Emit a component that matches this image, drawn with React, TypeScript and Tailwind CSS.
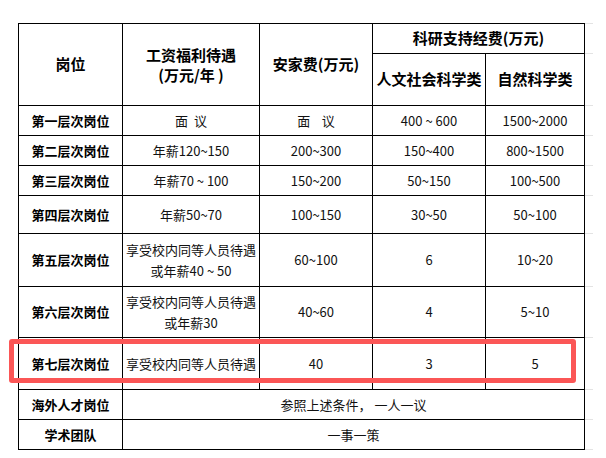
const rows: { name: string; pay: string[]; home: string; hum: string; sci: string; h: string }[] = [
  { name: "第一层次岗位", pay: ["面  议"], home: "面    议", hum: "400 ~ 600", sci: "1500~2000", h: "h-[30px]" },
  { name: "第二层次岗位", pay: ["年薪120~150"], home: "200~300", hum: "150~400", sci: "800~1500", h: "h-[30px]" },
  { name: "第三层次岗位", pay: ["年薪70 ~ 100"], home: "150~200", hum: "50~150", sci: "100~500", h: "h-[30px]" },
  { name: "第四层次岗位", pay: ["年薪50~70"], home: "100~150", hum: "30~50", sci: "50~100", h: "h-[38px]" },
  { name: "第五层次岗位", pay: ["享受校内同等人员待遇", "或年薪40 ~ 50"], home: "60~100", hum: "6", sci: "10~20", h: "h-[53px]" },
  { name: "第六层次岗位", pay: ["享受校内同等人员待遇", "或年薪30"], home: "40~60", hum: "4", sci: "5~10", h: "h-[51px]" },
  { name: "第七层次岗位", pay: ["享受校内同等人员待遇"], home: "40", hum: "3", sci: "5", h: "h-[52px]" },
];

const cell = "border border-black text-center align-middle p-0";
const stub = "w-[8px] p-0 border-b border-b-[#e3e3e3]";

export default function App() {
  return (
    <div className="w-[606px] h-[458px] bg-white pt-[23px] pl-[18px] font-['Noto_Sans_CJK_SC','Noto_Sans',sans-serif] text-[13px] text-[#111]">
      <div className="relative w-[574px]">
        <table className="border-collapse table-fixed w-[574px]">
          <colgroup>
            <col className="w-[104px]" />
            <col className="w-[137px]" />
            <col className="w-[113px]" />
            <col className="w-[113px]" />
            <col className="w-[99px]" />
            <col className="w-[8px]" />
          </colgroup>
          <tbody>
            <tr className="h-[30px]">
              <td rowSpan={2} className={cell + " font-bold text-[15px] text-black"}>岗位</td>
              <td rowSpan={2} className={cell + " font-bold text-[15px] text-black leading-[20px]"}>
                工资福利待遇
                <br />
                (万元/年 )
              </td>
              <td rowSpan={2} className={cell + " font-bold text-[15px] text-black"}>安家费(万元)</td>
              <td colSpan={2} className={cell + " font-bold text-[15px] text-black"}>科研支持经费(万元)</td>
              <td className={stub + " border-t border-t-[#e3e3e3]"} />
            </tr>
            <tr className="h-[52px]">
              <td className={cell + " font-bold text-[15px] text-black"}>人文社会科学类</td>
              <td className={cell + " font-bold text-[15px] text-black"}>自然科学类</td>
              <td className={stub} />
            </tr>
            {rows.map((r) => (
              <tr key={r.name} className={r.h}>
                <td className={cell + " font-bold text-black"}>{r.name}</td>
                <td className={cell + " leading-[21px]"}>
                  {r.pay.map((p, i) => (
                    <div key={i} className="whitespace-pre">{p}</div>
                  ))}
                </td>
                <td className={cell + " whitespace-pre"}>{r.home}</td>
                <td className={cell + " whitespace-pre"}>{r.hum}</td>
                <td className={cell}>{r.sci}</td>
                <td className={stub} />
              </tr>
            ))}
            <tr className="h-[30px]">
              <td className={cell + " font-bold text-black"}>海外人才岗位</td>
              <td colSpan={4} className={cell}>参照上述条件， 一人一议</td>
              <td className={stub} />
            </tr>
            <tr className="h-[30px]">
              <td className={cell + " font-bold text-black"}>学术团队</td>
              <td colSpan={4} className={cell}>一事一策</td>
              <td className={stub} />
            </tr>
          </tbody>
        </table>
        <div className="absolute left-[-9px] top-[316px] w-[567px] h-[44px] border-[5px] border-[#fb5656] rounded-[3px] pointer-events-none" />
      </div>
    </div>
  );
}
